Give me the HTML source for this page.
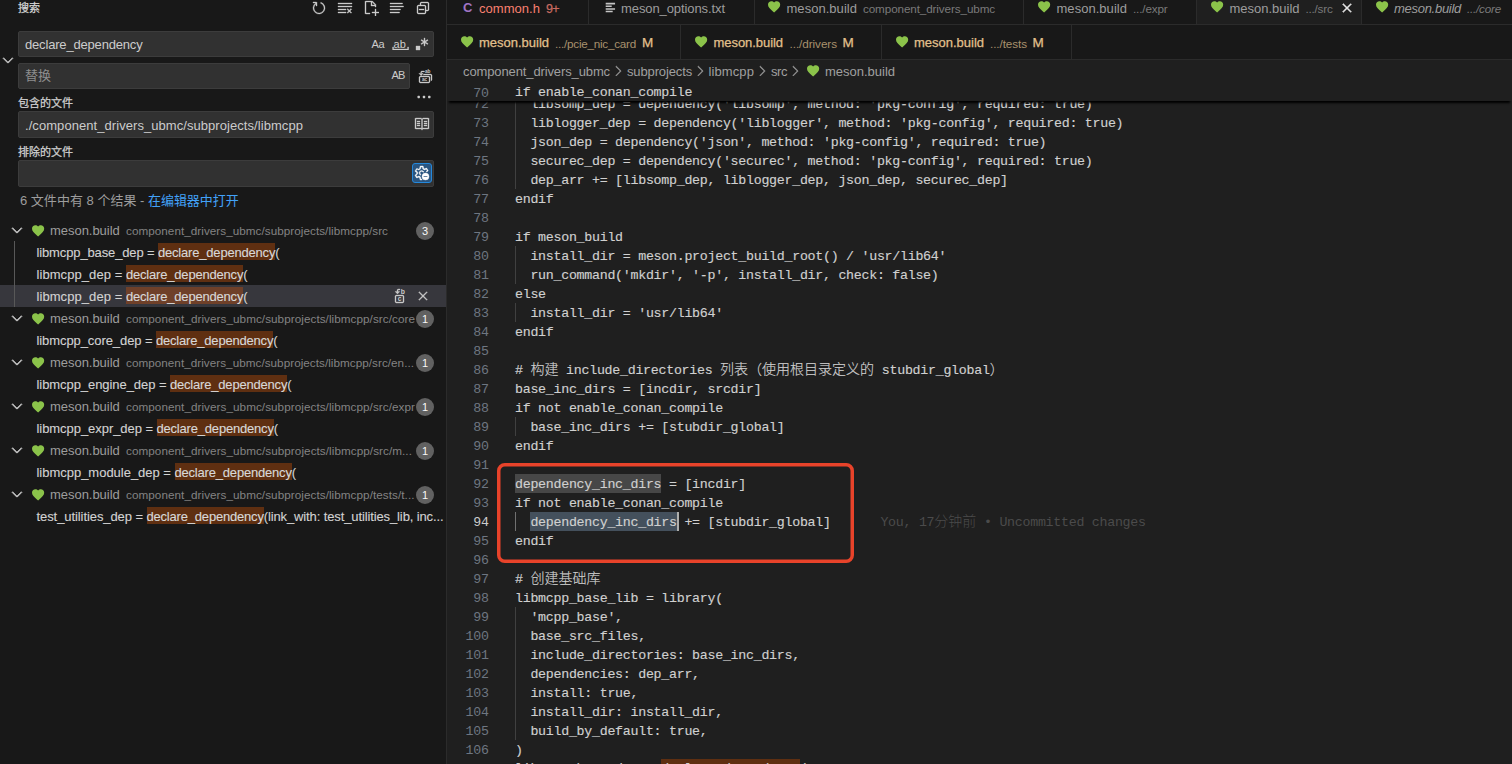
<!DOCTYPE html>
<html lang="zh-CN">
<head>
<meta charset="utf-8">
<title>搜索 - meson.build</title>
<style>
*{box-sizing:border-box;margin:0;padding:0}
html,body{width:1512px;height:764px;overflow:hidden;background:#1f1f1f}
body{position:relative;font-family:'Liberation Sans','Noto Sans CJK SC',sans-serif;font-size:13px;color:#cccccc}
.abs{position:absolute}
svg{display:block}
.tx{position:absolute;white-space:pre;display:block}
#sidebar{position:absolute;left:0;top:0;width:447px;height:764px;background:#181818;border-right:1px solid #2b2b2b;overflow:hidden}
.inp{position:absolute;left:18px;height:26px;background:#313131;border:1px solid #3c3c3c;border-radius:2px}
.badge{position:absolute;left:416px;width:18px;height:18px;border-radius:9px;background:#616161;color:#f8f8f8;font-size:11px;line-height:18px;text-align:center}
#editor{position:absolute;left:447px;top:0;width:1065px;height:764px;background:#1f1f1f;overflow:hidden}
.code{font-family:'Liberation Mono','Noto Sans CJK SC',monospace;white-space:pre;color:#d0d0d0}
.cl{-webkit-text-stroke:0.15px currentColor}
.cj{font-size:14px;letter-spacing:0;font-weight:300}
.ln{position:absolute;left:0;width:41.6px;text-align:right;height:19px;line-height:21px;color:#6e7681}
.cl{position:absolute;left:68px;height:19px;line-height:21px;white-space:pre;overflow:visible}
</style>
</head>
<body>
<div id="sidebar">
<span class="tx" style="left:18px;top:0.0px;height:16px;line-height:16px;font-size:11px;color:#d4d4d4;letter-spacing:0.0px;-webkit-text-stroke:0.25px currentColor;">搜索</span>
<svg class="abs" style="left:311px;top:0px;" width="16" height="16" viewBox="0 0 16 16" fill="#cccccc" stroke="#cccccc" stroke-width="0.35" stroke-linejoin="round"><path fill-rule="evenodd" clip-rule="evenodd" d="M4.681 3H2V2h3.5l.5.5V6H5V4a5 5 0 1 0 4.53-.761l.302-.954A6 6 0 1 1 4.681 3z"/></svg>
<svg class="abs" style="left:337px;top:0px;" width="16" height="16" viewBox="0 0 16 16" fill="#cccccc" stroke="#cccccc" stroke-width="0.35" stroke-linejoin="round"><path d="M10 12.6l.7.7 1.6-1.6 1.6 1.6.8-.7L13 11l1.7-1.6-.8-.8-1.6 1.7-1.6-1.7-.7.8 1.6 1.6-1.6 1.6zM1 4h14V3H1v1zm0 3h14V6H1v1zm8 2.5V9H1v1h8v-.5zM9 13v-1H1v1h8z"/></svg>
<svg class="abs" style="left:363px;top:0px;" width="16" height="16" viewBox="0 0 16 16" fill="#cccccc" stroke="#cccccc" stroke-width="0.35" stroke-linejoin="round"><path fill-rule="evenodd" clip-rule="evenodd" d="M9.5 1.1l3.4 3.5.1.4v2h-1V6H8V2H3v11h4v1H2.5l-.5-.5v-12l.5-.5h6.7l.3.1zM9 2v3h2.9L9 2zm4 14h-1v-3H9v-1h3V9h1v3h3v1h-3v3z"/></svg>
<svg class="abs" style="left:388px;top:0px;" width="16" height="16" viewBox="0 0 16 16" fill="#cccccc" stroke="#cccccc" stroke-width="0.35" stroke-linejoin="round"><path d="M2 3h12.5v1H2zM2 6h13.5v1H2zM2 9h10.5v1H2zM2 12h9.5v1H2z"/></svg>
<svg class="abs" style="left:415px;top:0px;" width="16" height="16" viewBox="0 0 16 16" fill="#cccccc" stroke="#cccccc" stroke-width="0.35" stroke-linejoin="round"><path d="M9 9H4v1h5V9z"/><path fill-rule="evenodd" clip-rule="evenodd" d="M5 3l1-1h7l1 1v7l-1 1h-2v2l-1 1H3l-1-1V6l1-1h2V3zm1 2h4l1 1v4h2V3H6v2zm4 1H3v7h7V6z"/></svg>
<div class="inp" style="top:31px;width:416px"></div>
<span class="tx" style="left:25px;top:36.0px;height:18px;line-height:18px;font-size:13px;color:#cccccc;letter-spacing:-0.178px;">declare_dependency</span>
<span class="tx" style="left:371.6px;top:35.0px;height:18px;line-height:18px;font-size:11px;color:#cccccc;letter-spacing:-0.377px;">Aa</span>
<span class="tx" style="left:393.5px;top:34.5px;height:18px;line-height:18px;font-size:11px;color:#cccccc;letter-spacing:0.232px;">ab</span>
<svg class="abs" style="left:391.5px;top:36px;" width="17.2" height="14" viewBox="0 0 16 14" fill="#cccccc" stroke="#cccccc" stroke-width="0.35" stroke-linejoin="round"><path fill-rule="evenodd" clip-rule="evenodd" d="M0 11H1V13H15V11H16V14H15H1H0V11Z"/></svg>
<svg class="abs" style="left:413.6px;top:35.7px;" width="16" height="16" viewBox="0 0 16 16" fill="#cccccc" stroke="#cccccc" stroke-width="0.35" stroke-linejoin="round"><path fill-rule="evenodd" clip-rule="evenodd" d="M10.012 2h.976v3.113l2.56-1.557.486.885L11.47 6l2.564 1.559-.485.885-2.561-1.557V10h-.976V6.887l-2.56 1.557-.486-.885L9.53 6 6.966 4.441l.485-.885 2.561 1.557V2zM2 10h4v4H2v-4z"/></svg>
<svg class="abs" style="left:-0.3px;top:52.3px;" width="16" height="16" viewBox="0 0 16 16" fill="#cccccc" stroke="#cccccc" stroke-width="0.6" stroke-linejoin="round"><path fill-rule="evenodd" clip-rule="evenodd" d="M7.976 10.072l4.357-4.357.62.618L8.284 11h-.618L3 6.333l.619-.618 4.357 4.357z"/></svg>
<div class="inp" style="top:63px;width:392px"></div>
<span class="tx" style="left:25px;top:67.0px;height:18px;line-height:18px;font-size:13px;color:#8e8e8e;letter-spacing:-0.0px;">替换</span>
<span class="tx" style="left:391.4px;top:65.8px;height:18px;line-height:18px;font-size:11px;color:#cccccc;letter-spacing:-0.687px;">AB</span>
<svg class="abs" style="left:417.3px;top:68.3px;opacity:.99;" width="16" height="16" viewBox="0 0 16 16" fill="#cccccc" stroke="#cccccc" stroke-width="0.35" stroke-linejoin="round"><path fill-rule="evenodd" clip-rule="evenodd" d="M2 9l1-1h9l1 1v5l-1 1H3l-1-1V9zm1 0v5h9V9H3zm3-2l1-1h7l1 1v5l-1 1V7H6z"/><path d="M4.12 7.695L2 5.568l.662-.662 1.006 1v-1.51A1.39 1.39 0 0 1 5.055 3H7.4v.905H5.055a.49.49 0 0 0-.468.493l.007 1.5.949-.944.656.656-2.08 2.085z"/><text transform="translate(7.9,5) scale(0.5)" font-size="9.6" font-family="Liberation Sans, sans-serif" font-weight="bold" stroke="none">ab</text><text transform="translate(4.9,13) scale(0.5)" font-size="9.6" font-family="Liberation Sans, sans-serif" font-weight="bold" stroke="none">ac</text></svg>
<span class="tx" style="left:18px;top:95.5px;height:14px;line-height:14px;font-size:11px;color:#d0d0d0;letter-spacing:0.0px;-webkit-text-stroke:0.25px currentColor;">包含的文件</span>
<svg class="abs" style="left:415.7px;top:89px;" width="16" height="16" viewBox="0 0 16 16" fill="#cccccc"><rect x="1.5" y="6.8" width="2.4" height="2.4" rx="0.6"/><rect x="6.8" y="6.8" width="2.4" height="2.4" rx="0.6"/><rect x="12.100" y="6.8" width="2.4" height="2.4" rx="0.6"/></svg>
<div class="inp" style="top:111px;width:416px;height:27px"></div>
<span class="tx" style="left:25px;top:117.0px;height:18px;line-height:18px;font-size:13px;color:#cccccc;letter-spacing:0.061px;">./component_drivers_ubmc/subprojects/libmcpp</span>
<svg class="abs" style="left:414.2px;top:115.7px;" width="16" height="16" viewBox="0 0 16 16" fill="#cccccc" stroke="#cccccc" stroke-width="0.35" stroke-linejoin="round"><path fill-rule="evenodd" clip-rule="evenodd" d="M14.5 2H9l-.35.15-.65.64-.65-.64L7 2H1.5l-.5.5v10l.5.5h5.29l.86.85h.7l.86-.85h5.29l.5-.5v-10l-.5-.5zm-7 10.32l-.18-.17L7 12H2V3h4.79l.74.74-.03 8.58zM14 12H9l-.35.15-.14.13V3.7l.7-.7H14v9zM6 5H3v1h3V5zm0 4H3v1h3V9zM3 7h3v1H3V7zm10-2h-3v1h3V5zm-3 2h3v1h-3V7zm0 2h3v1h-3V9z"/></svg>
<span class="tx" style="left:18px;top:144.5px;height:14px;line-height:14px;font-size:11px;color:#d0d0d0;letter-spacing:0.0px;-webkit-text-stroke:0.25px currentColor;">排除的文件</span>
<div class="inp" style="top:160px;width:416px;height:27px"></div>
<div class="abs" style="left:412px;top:163px;width:20px;height:20px;border:1px solid #2488db;border-radius:3px;background:#2a5580"></div>
<svg class="abs" style="left:414px;top:165px;" width="16" height="16" viewBox="0 0 16 16" fill="#ffffff" stroke="#ffffff" stroke-width="0.35" stroke-linejoin="round"><path d="M6.32 15l-.42-.38-.28-1.78a5.4 5.4 0 0 1-1.02-.6l-1.68.65-.55-.18-1.3-2.26.12-.56 1.4-1.12a5.2 5.2 0 0 1 0-1.18l-1.4-1.13-.12-.55 1.3-2.26.55-.18 1.68.65c.32-.24.66-.44 1.02-.6l.28-1.78L6.32 1h2.62l.42.38.28 1.78c.36.16.7.36 1.02.6l1.68-.65.55.18 1.3 2.26-.12.55-1.2.97a4.5 4.5 0 0 0-.98-.37l1.22-.98-.87-1.5-1.75.68-.43-.07a4.3 4.3 0 0 0-1.14-.66l-.27-.34L8.36 2H6.9l-.29 1.83-.27.34c-.41.16-.8.38-1.14.66l-.43.07-1.75-.68-.87 1.5 1.47 1.18.15.4a4.3 4.3 0 0 0 0 1.32l-.15.4-1.47 1.18.87 1.5 1.75-.68.43.07c.34.28.73.5 1.14.66l.27.34L6.9 14h.72c.13.36.3.7.52 1H6.320z"/><path d="M7.63 5.5a2.500 2.500 0 0 0-.9 4.830 4.500 4.500 0 0 1 .27-1.080 1.500 1.500 0 1 1 1.960-1.960 4.500 4.500 0 0 1 1.080-.270A2.500 2.500 0 0 0 7.630 5.500z"/><path fill-rule="evenodd" d="M11.500 8a3.500 3.500 0 1 0 0 7 3.500 3.500 0 0 0 0-7zm-2 3h4v1h-4v-1z"/></svg>
<span class="tx" style="left:20px;top:192.0px;height:18px;line-height:18px;font-size:13px;color:#9d9d9d;letter-spacing:0.01px;">6 文件中有 8 个结果 - </span>
<span class="tx" style="left:148px;top:192.0px;height:18px;line-height:18px;font-size:13px;color:#42a2f8;letter-spacing:-0.043px;">在编辑器中打开</span>
<div class="abs" style="left:0;top:285px;width:446px;height:22px;background:#37373d"></div>
<div class="abs" style="left:14px;top:241px;width:1px;height:66px;background:#585858"></div>
<svg class="abs" style="left:9px;top:222px;" width="16" height="16" viewBox="0 0 16 16" fill="#cccccc" stroke="#cccccc" stroke-width="0.7" stroke-linejoin="round"><path fill-rule="evenodd" clip-rule="evenodd" d="M7.976 10.072l4.357-4.357.62.618L8.284 11h-.618L3 6.333l.619-.618 4.357 4.357z"/></svg><svg class="abs" style="left:32px;top:224.5px;overflow:visible;" width="12.2" height="11.8" viewBox="2 3 20 18.35" fill="#8bc34a"><path d="M12 21.35l-1.45-1.32C5.4 15.36 2 12.28 2 8.5 2 5.42 4.42 3 7.5 3c1.74 0 3.41.81 4.5 2.09C13.09 3.81 14.76 3 16.5 3 19.58 3 22 5.42 22 8.5c0 3.78-3.4 6.86-8.55 11.54L12 21.35z"/></svg><span class="tx" style="left:50px;top:221.5px;height:18px;line-height:18px;font-size:13px;color:#9d9d9d;letter-spacing:-0.036px;">meson.build</span><span class="tx" style="left:126px;top:222.0px;height:18px;line-height:18px;font-size:11.7px;color:#838383;letter-spacing:0.047px;">component_drivers_ubmc/subprojects/libmcpp/src</span><div class="badge" style="top:222px">3</div>
<div class="abs" style="left:158px;top:243px;width:117.2px;height:17px;background:#5f2f11"></div><span class="tx" style="left:36.5px;top:243.5px;height:18px;line-height:18px;font-size:13px;color:#d2d2d2;letter-spacing:-0.129px;-webkit-text-stroke:0.12px currentColor;">libmcpp_base_dep = </span><span class="tx" style="left:158px;top:243.5px;height:18px;line-height:18px;font-size:13px;color:#d8d8d8;letter-spacing:-0.195px;-webkit-text-stroke:0.12px currentColor;">declare_dependency</span><span class="tx" style="left:275.2px;top:243.5px;height:18px;line-height:18px;font-size:13px;color:#d2d2d2;letter-spacing:0.171px;-webkit-text-stroke:0.12px currentColor;">(</span>
<div class="abs" style="left:126px;top:265px;width:117.2px;height:17px;background:#5f2f11"></div><span class="tx" style="left:36.5px;top:265.5px;height:18px;line-height:18px;font-size:13px;color:#d2d2d2;letter-spacing:0.069px;-webkit-text-stroke:0.12px currentColor;">libmcpp_dep = </span><span class="tx" style="left:126px;top:265.5px;height:18px;line-height:18px;font-size:13px;color:#d8d8d8;letter-spacing:-0.195px;-webkit-text-stroke:0.12px currentColor;">declare_dependency</span><span class="tx" style="left:243.2px;top:265.5px;height:18px;line-height:18px;font-size:13px;color:#d2d2d2;letter-spacing:0.171px;-webkit-text-stroke:0.12px currentColor;">(</span>
<div class="abs" style="left:126px;top:287px;width:117.2px;height:17px;background:#6f4029"></div><span class="tx" style="left:36.5px;top:287.5px;height:18px;line-height:18px;font-size:13px;color:#d2d2d2;letter-spacing:0.069px;-webkit-text-stroke:0.12px currentColor;">libmcpp_dep = </span><span class="tx" style="left:126px;top:287.5px;height:18px;line-height:18px;font-size:13px;color:#d8d8d8;letter-spacing:-0.195px;-webkit-text-stroke:0.12px currentColor;">declare_dependency</span><span class="tx" style="left:243.2px;top:287.5px;height:18px;line-height:18px;font-size:13px;color:#d2d2d2;letter-spacing:0.171px;-webkit-text-stroke:0.12px currentColor;">(</span>
<svg class="abs" style="left:392px;top:288px;opacity:.99;" width="16" height="16" viewBox="0 0 16 16" fill="#cccccc" stroke="#cccccc" stroke-width="0.35" stroke-linejoin="round"><path fill-rule="evenodd" clip-rule="evenodd" d="M4 7L3 8v6l1 1h7l1-1V8l-1-1H4zm0 1h7v6H4V8z"/><path d="M3.221 3.739l2.261 2.269L7.7 3.784l-.7-.7-1.012 1.007-.008-1.6a.523.523 0 0 1 .5-.526H8V1H6.48A1.482 1.482 0 0 0 5 2.489V4.1L3.927 3.033l-.706.706z"/><text transform="translate(8.7,5.95) scale(0.5)" font-size="13.6" font-family="Liberation Sans, sans-serif" font-weight="bold" stroke="none">b</text><text transform="translate(5.8,12.95) scale(0.5)" font-size="13.6" font-family="Liberation Sans, sans-serif" font-weight="bold" stroke="none">c</text></svg>
<svg class="abs" style="left:415px;top:288px;" width="16" height="16" viewBox="0 0 16 16" fill="#cccccc" stroke="#cccccc" stroke-width="0.35" stroke-linejoin="round"><path fill-rule="evenodd" clip-rule="evenodd" d="M8 8.707l3.646 3.647.708-.707L8.707 8l3.647-3.646-.707-.708L8 7.293 4.354 3.646l-.707.708L7.293 8l-3.646 3.646.707.708L8 8.707z"/></svg>
<svg class="abs" style="left:9px;top:310px;" width="16" height="16" viewBox="0 0 16 16" fill="#cccccc" stroke="#cccccc" stroke-width="0.7" stroke-linejoin="round"><path fill-rule="evenodd" clip-rule="evenodd" d="M7.976 10.072l4.357-4.357.62.618L8.284 11h-.618L3 6.333l.619-.618 4.357 4.357z"/></svg><svg class="abs" style="left:32px;top:312.5px;overflow:visible;" width="12.2" height="11.8" viewBox="2 3 20 18.35" fill="#8bc34a"><path d="M12 21.35l-1.45-1.32C5.4 15.36 2 12.28 2 8.5 2 5.42 4.42 3 7.5 3c1.74 0 3.41.81 4.5 2.09C13.09 3.81 14.76 3 16.5 3 19.58 3 22 5.42 22 8.5c0 3.78-3.4 6.86-8.55 11.54L12 21.35z"/></svg><span class="tx" style="left:50px;top:309.5px;height:18px;line-height:18px;font-size:13px;color:#9d9d9d;letter-spacing:-0.036px;">meson.build</span><span class="tx" style="left:126px;top:310.0px;height:18px;line-height:18px;font-size:11.7px;color:#838383;letter-spacing:0.062px;">component_drivers_ubmc/subprojects/libmcpp/src/core</span><div class="badge" style="top:310px">1</div>
<div class="abs" style="left:156px;top:331px;width:117.2px;height:17px;background:#5f2f11"></div><span class="tx" style="left:36.5px;top:331.5px;height:18px;line-height:18px;font-size:13px;color:#d2d2d2;letter-spacing:-0.082px;-webkit-text-stroke:0.12px currentColor;">libmcpp_core_dep = </span><span class="tx" style="left:156px;top:331.5px;height:18px;line-height:18px;font-size:13px;color:#d8d8d8;letter-spacing:-0.195px;-webkit-text-stroke:0.12px currentColor;">declare_dependency</span><span class="tx" style="left:273.2px;top:331.5px;height:18px;line-height:18px;font-size:13px;color:#d2d2d2;letter-spacing:0.171px;-webkit-text-stroke:0.12px currentColor;">(</span>
<svg class="abs" style="left:9px;top:354px;" width="16" height="16" viewBox="0 0 16 16" fill="#cccccc" stroke="#cccccc" stroke-width="0.7" stroke-linejoin="round"><path fill-rule="evenodd" clip-rule="evenodd" d="M7.976 10.072l4.357-4.357.62.618L8.284 11h-.618L3 6.333l.619-.618 4.357 4.357z"/></svg><svg class="abs" style="left:32px;top:356.5px;overflow:visible;" width="12.2" height="11.8" viewBox="2 3 20 18.35" fill="#8bc34a"><path d="M12 21.35l-1.45-1.32C5.4 15.36 2 12.28 2 8.5 2 5.42 4.42 3 7.5 3c1.74 0 3.41.81 4.5 2.09C13.09 3.81 14.76 3 16.5 3 19.58 3 22 5.42 22 8.5c0 3.78-3.4 6.86-8.55 11.54L12 21.35z"/></svg><span class="tx" style="left:50px;top:353.5px;height:18px;line-height:18px;font-size:13px;color:#9d9d9d;letter-spacing:-0.036px;">meson.build</span><span class="tx" style="left:126px;top:354.0px;height:18px;line-height:18px;font-size:11.7px;color:#838383;letter-spacing:0.042px;">component_drivers_ubmc/subprojects/libmcpp/src/en...</span><div class="badge" style="top:354px">1</div>
<div class="abs" style="left:170px;top:375px;width:117.2px;height:17px;background:#5f2f11"></div><span class="tx" style="left:36.5px;top:375.5px;height:18px;line-height:18px;font-size:13px;color:#d2d2d2;letter-spacing:-0.062px;-webkit-text-stroke:0.12px currentColor;">libmcpp_engine_dep = </span><span class="tx" style="left:170px;top:375.5px;height:18px;line-height:18px;font-size:13px;color:#d8d8d8;letter-spacing:-0.195px;-webkit-text-stroke:0.12px currentColor;">declare_dependency</span><span class="tx" style="left:287.2px;top:375.5px;height:18px;line-height:18px;font-size:13px;color:#d2d2d2;letter-spacing:0.171px;-webkit-text-stroke:0.12px currentColor;">(</span>
<svg class="abs" style="left:9px;top:398px;" width="16" height="16" viewBox="0 0 16 16" fill="#cccccc" stroke="#cccccc" stroke-width="0.7" stroke-linejoin="round"><path fill-rule="evenodd" clip-rule="evenodd" d="M7.976 10.072l4.357-4.357.62.618L8.284 11h-.618L3 6.333l.619-.618 4.357 4.357z"/></svg><svg class="abs" style="left:32px;top:400.5px;overflow:visible;" width="12.2" height="11.8" viewBox="2 3 20 18.35" fill="#8bc34a"><path d="M12 21.35l-1.45-1.32C5.4 15.36 2 12.28 2 8.5 2 5.42 4.42 3 7.5 3c1.74 0 3.41.81 4.5 2.09C13.09 3.81 14.76 3 16.5 3 19.58 3 22 5.42 22 8.5c0 3.78-3.4 6.86-8.55 11.54L12 21.35z"/></svg><span class="tx" style="left:50px;top:397.5px;height:18px;line-height:18px;font-size:13px;color:#9d9d9d;letter-spacing:-0.036px;">meson.build</span><span class="tx" style="left:126px;top:398.0px;height:18px;line-height:18px;font-size:11.7px;color:#838383;letter-spacing:0.062px;">component_drivers_ubmc/subprojects/libmcpp/src/expr</span><div class="badge" style="top:398px">1</div>
<div class="abs" style="left:156.5px;top:419px;width:117.2px;height:17px;background:#5f2f11"></div><span class="tx" style="left:36.5px;top:419.5px;height:18px;line-height:18px;font-size:13px;color:#d2d2d2;letter-spacing:-0.055px;-webkit-text-stroke:0.12px currentColor;">libmcpp_expr_dep = </span><span class="tx" style="left:156.5px;top:419.5px;height:18px;line-height:18px;font-size:13px;color:#d8d8d8;letter-spacing:-0.195px;-webkit-text-stroke:0.12px currentColor;">declare_dependency</span><span class="tx" style="left:273.7px;top:419.5px;height:18px;line-height:18px;font-size:13px;color:#d2d2d2;letter-spacing:0.171px;-webkit-text-stroke:0.12px currentColor;">(</span>
<svg class="abs" style="left:9px;top:442px;" width="16" height="16" viewBox="0 0 16 16" fill="#cccccc" stroke="#cccccc" stroke-width="0.7" stroke-linejoin="round"><path fill-rule="evenodd" clip-rule="evenodd" d="M7.976 10.072l4.357-4.357.62.618L8.284 11h-.618L3 6.333l.619-.618 4.357 4.357z"/></svg><svg class="abs" style="left:32px;top:444.5px;overflow:visible;" width="12.2" height="11.8" viewBox="2 3 20 18.35" fill="#8bc34a"><path d="M12 21.35l-1.45-1.32C5.4 15.36 2 12.28 2 8.5 2 5.42 4.42 3 7.5 3c1.74 0 3.41.81 4.5 2.09C13.09 3.81 14.76 3 16.5 3 19.58 3 22 5.42 22 8.5c0 3.78-3.4 6.86-8.55 11.54L12 21.35z"/></svg><span class="tx" style="left:50px;top:441.5px;height:18px;line-height:18px;font-size:13px;color:#9d9d9d;letter-spacing:-0.036px;">meson.build</span><span class="tx" style="left:126px;top:442.0px;height:18px;line-height:18px;font-size:11.7px;color:#838383;letter-spacing:0.067px;">component_drivers_ubmc/subprojects/libmcpp/src/m...</span><div class="badge" style="top:442px">1</div>
<div class="abs" style="left:174.5px;top:463px;width:117.2px;height:17px;background:#5f2f11"></div><span class="tx" style="left:36.5px;top:463.5px;height:18px;line-height:18px;font-size:13px;color:#d2d2d2;letter-spacing:-0.019px;-webkit-text-stroke:0.12px currentColor;">libmcpp_module_dep = </span><span class="tx" style="left:174.5px;top:463.5px;height:18px;line-height:18px;font-size:13px;color:#d8d8d8;letter-spacing:-0.195px;-webkit-text-stroke:0.12px currentColor;">declare_dependency</span><span class="tx" style="left:291.7px;top:463.5px;height:18px;line-height:18px;font-size:13px;color:#d2d2d2;letter-spacing:0.171px;-webkit-text-stroke:0.12px currentColor;">(</span>
<svg class="abs" style="left:9px;top:486px;" width="16" height="16" viewBox="0 0 16 16" fill="#cccccc" stroke="#cccccc" stroke-width="0.7" stroke-linejoin="round"><path fill-rule="evenodd" clip-rule="evenodd" d="M7.976 10.072l4.357-4.357.62.618L8.284 11h-.618L3 6.333l.619-.618 4.357 4.357z"/></svg><svg class="abs" style="left:32px;top:488.5px;overflow:visible;" width="12.2" height="11.8" viewBox="2 3 20 18.35" fill="#8bc34a"><path d="M12 21.35l-1.45-1.32C5.4 15.36 2 12.28 2 8.5 2 5.42 4.42 3 7.5 3c1.74 0 3.41.81 4.5 2.09C13.09 3.81 14.76 3 16.5 3 19.58 3 22 5.42 22 8.5c0 3.78-3.4 6.86-8.55 11.54L12 21.35z"/></svg><span class="tx" style="left:50px;top:485.5px;height:18px;line-height:18px;font-size:13px;color:#9d9d9d;letter-spacing:-0.036px;">meson.build</span><span class="tx" style="left:126px;top:486.0px;height:18px;line-height:18px;font-size:11.7px;color:#838383;letter-spacing:0.063px;">component_drivers_ubmc/subprojects/libmcpp/tests/t...</span><div class="badge" style="top:486px">1</div>
<div class="abs" style="left:146.5px;top:507px;width:117.2px;height:17px;background:#5f2f11"></div><span class="tx" style="left:36.5px;top:507.5px;height:18px;line-height:18px;font-size:13px;color:#d2d2d2;letter-spacing:-0.079px;-webkit-text-stroke:0.12px currentColor;">test_utilities_dep = </span><span class="tx" style="left:146.5px;top:507.5px;height:18px;line-height:18px;font-size:13px;color:#d8d8d8;letter-spacing:-0.195px;-webkit-text-stroke:0.12px currentColor;">declare_dependency</span><span class="tx" style="left:263.7px;top:507.5px;height:18px;line-height:18px;font-size:13px;color:#d2d2d2;letter-spacing:-0.117px;-webkit-text-stroke:0.12px currentColor;">(link_with: test_utilities_lib, inc...</span>
</div>
<div id="editor">
<div class="abs" style="left:0;top:0;width:1065px;height:25px;background:#181818;border-bottom:1px solid #2b2b2b"></div>
<div class="abs" style="left:750px;top:0;width:164px;height:24px;background:#1f1f1f"></div>
<div class="abs" style="left:141px;top:0;width:1px;height:24px;background:#2b2b2b"></div>
<div class="abs" style="left:307px;top:0;width:1px;height:24px;background:#2b2b2b"></div>
<div class="abs" style="left:576px;top:0;width:1px;height:24px;background:#2b2b2b"></div>
<div class="abs" style="left:749px;top:0;width:1px;height:24px;background:#2b2b2b"></div>
<div class="abs" style="left:914px;top:0;width:1px;height:24px;background:#2b2b2b"></div>
<span class="tx" style="left:16px;top:-1.5px;height:18px;line-height:18px;font-size:13px;color:#a074c4;letter-spacing:-0.888px;font-weight:bold;">C</span>
<span class="tx" style="left:32px;top:-0.5px;height:18px;line-height:18px;font-size:13px;color:#f88070;letter-spacing:0.039px;">common.h</span>
<span class="tx" style="left:99px;top:-0.5px;height:18px;line-height:18px;font-size:12.5px;color:#c86b60;letter-spacing:-0.626px;-webkit-text-stroke:0.25px currentColor;">9+</span>
<svg class="abs" style="left:158.29999999999995px;top:1.6px;" width="11.2" height="11.2" viewBox="0 0 16 16" fill="#c5c5c5"><path d="M1 1.2h13.4v2.2H1zM1 5h8.6v2.2H1zM1 8.8h13.4v2.2H1zM1 12.600h10v2.2H1z"/></svg>
<span class="tx" style="left:174px;top:-0.5px;height:18px;line-height:18px;font-size:13px;color:#9d9d9d;letter-spacing:-0.088px;">meson_options.txt</span>
<svg class="abs" style="left:321px;top:1.3px;overflow:visible;" width="12.2" height="11.8" viewBox="2 3 20 18.35" fill="#8bc34a"><path d="M12 21.35l-1.45-1.32C5.4 15.36 2 12.28 2 8.5 2 5.42 4.42 3 7.5 3c1.74 0 3.41.81 4.5 2.09C13.09 3.81 14.76 3 16.5 3 19.58 3 22 5.42 22 8.5c0 3.78-3.4 6.86-8.55 11.54L12 21.35z"/></svg>
<span class="tx" style="left:339.5px;top:-0.5px;height:18px;line-height:18px;font-size:13px;color:#9d9d9d;letter-spacing:0.037px;">meson.build</span>
<span class="tx" style="left:416px;top:0.0px;height:18px;line-height:18px;font-size:11.7px;color:#7a7a7a;letter-spacing:-0.112px;">component_drivers_ubmc</span>
<svg class="abs" style="left:590.5px;top:1.3px;overflow:visible;" width="12.2" height="11.8" viewBox="2 3 20 18.35" fill="#8bc34a"><path d="M12 21.35l-1.45-1.32C5.4 15.36 2 12.28 2 8.5 2 5.42 4.42 3 7.5 3c1.74 0 3.41.81 4.5 2.09C13.09 3.81 14.76 3 16.5 3 19.58 3 22 5.42 22 8.5c0 3.78-3.4 6.86-8.55 11.54L12 21.35z"/></svg>
<span class="tx" style="left:609.5px;top:-0.5px;height:18px;line-height:18px;font-size:13px;color:#9d9d9d;letter-spacing:0.037px;">meson.build</span>
<span class="tx" style="left:686px;top:0.0px;height:18px;line-height:18px;font-size:11.7px;color:#7a7a7a;letter-spacing:-0.153px;">.../expr</span>
<svg class="abs" style="left:764px;top:1.3px;overflow:visible;" width="12.2" height="11.8" viewBox="2 3 20 18.35" fill="#8bc34a"><path d="M12 21.35l-1.45-1.32C5.4 15.36 2 12.28 2 8.5 2 5.42 4.42 3 7.5 3c1.74 0 3.41.81 4.5 2.09C13.09 3.81 14.76 3 16.5 3 19.58 3 22 5.42 22 8.5c0 3.78-3.4 6.86-8.55 11.54L12 21.35z"/></svg>
<span class="tx" style="left:782.5px;top:-0.5px;height:18px;line-height:18px;font-size:13px;color:#9d9d9d;letter-spacing:-0.009px;">meson.build</span>
<span class="tx" style="left:858.5px;top:0.0px;height:18px;line-height:18px;font-size:11.7px;color:#7a7a7a;letter-spacing:-0.224px;">.../src</span>
<svg class="abs" style="left:892px;top:-0.5px;" width="16" height="16" viewBox="0 0 16 16" fill="#f0f0f0" stroke="#f0f0f0" stroke-width="0.6" stroke-linejoin="round"><path fill-rule="evenodd" clip-rule="evenodd" d="M8 8.707l3.646 3.647.708-.707L8.707 8l3.647-3.646-.707-.708L8 7.293 4.354 3.646l-.707.708L7.293 8l-3.646 3.646.707.708L8 8.707z"/></svg>
<svg class="abs" style="left:929px;top:1.3px;overflow:visible;" width="12.2" height="11.8" viewBox="2 3 20 18.35" fill="#8bc34a"><path d="M12 21.35l-1.45-1.32C5.4 15.36 2 12.28 2 8.5 2 5.42 4.42 3 7.5 3c1.74 0 3.41.81 4.5 2.09C13.09 3.81 14.76 3 16.5 3 19.58 3 22 5.42 22 8.5c0 3.78-3.4 6.86-8.55 11.54L12 21.35z"/></svg>
<span class="tx" style="left:947px;top:-0.5px;height:18px;line-height:18px;font-size:13px;color:#9d9d9d;letter-spacing:-0.282px;font-style:italic;">meson.build</span>
<span class="tx" style="left:1020px;top:0.0px;height:18px;line-height:18px;font-size:11.7px;color:#7a7a7a;letter-spacing:-0.216px;font-style:italic;">.../core</span>
<div class="abs" style="left:0;top:25px;width:1065px;height:35px;background:#181818;border-bottom:1px solid #2b2b2b"></div>
<div class="abs" style="left:233px;top:25px;width:1px;height:34px;background:#2b2b2b"></div>
<div class="abs" style="left:434px;top:25px;width:1px;height:34px;background:#2b2b2b"></div>
<div class="abs" style="left:624px;top:25px;width:1px;height:34px;background:#2b2b2b"></div>
<svg class="abs" style="left:14px;top:36px;overflow:visible;" width="12.2" height="11.8" viewBox="2 3 20 18.35" fill="#8bc34a"><path d="M12 21.35l-1.45-1.32C5.4 15.36 2 12.28 2 8.5 2 5.42 4.42 3 7.5 3c1.74 0 3.41.81 4.5 2.09C13.09 3.81 14.76 3 16.5 3 19.58 3 22 5.42 22 8.5c0 3.78-3.4 6.86-8.55 11.54L12 21.35z"/></svg>
<span class="tx" style="left:32px;top:34.2px;height:18px;line-height:18px;font-size:13px;color:#e2c08d;letter-spacing:-0.009px;-webkit-text-stroke:0.25px currentColor;">meson.build</span>
<span class="tx" style="left:108px;top:34.7px;height:18px;line-height:18px;font-size:11.7px;color:#a8916d;letter-spacing:-0.241px;">.../pcie_nic_card</span>
<span class="tx" style="left:195px;top:34.2px;height:18px;line-height:18px;font-size:13.5px;color:#e2c08d;letter-spacing:-0.746px;-webkit-text-stroke:0.25px currentColor;">M</span>
<svg class="abs" style="left:248px;top:36px;overflow:visible;" width="12.2" height="11.8" viewBox="2 3 20 18.35" fill="#8bc34a"><path d="M12 21.35l-1.45-1.32C5.4 15.36 2 12.28 2 8.5 2 5.42 4.42 3 7.5 3c1.74 0 3.41.81 4.5 2.09C13.09 3.81 14.76 3 16.5 3 19.58 3 22 5.42 22 8.5c0 3.78-3.4 6.86-8.55 11.54L12 21.35z"/></svg>
<span class="tx" style="left:266.5px;top:34.2px;height:18px;line-height:18px;font-size:13px;color:#e2c08d;letter-spacing:-0.054px;-webkit-text-stroke:0.25px currentColor;">meson.build</span>
<span class="tx" style="left:342.5px;top:34.7px;height:18px;line-height:18px;font-size:11.7px;color:#a8916d;letter-spacing:-0.051px;">.../drivers</span>
<span class="tx" style="left:395.5px;top:34.2px;height:18px;line-height:18px;font-size:13.5px;color:#e2c08d;letter-spacing:-1.246px;-webkit-text-stroke:0.25px currentColor;">M</span>
<svg class="abs" style="left:448.5px;top:36px;overflow:visible;" width="12.2" height="11.8" viewBox="2 3 20 18.35" fill="#8bc34a"><path d="M12 21.35l-1.45-1.32C5.4 15.36 2 12.28 2 8.5 2 5.42 4.42 3 7.5 3c1.74 0 3.41.81 4.5 2.09C13.09 3.81 14.76 3 16.5 3 19.58 3 22 5.42 22 8.5c0 3.78-3.4 6.86-8.55 11.54L12 21.35z"/></svg>
<span class="tx" style="left:467px;top:34.2px;height:18px;line-height:18px;font-size:13px;color:#e2c08d;letter-spacing:-0.009px;-webkit-text-stroke:0.25px currentColor;">meson.build</span>
<span class="tx" style="left:543px;top:34.7px;height:18px;line-height:18px;font-size:11.7px;color:#a8916d;letter-spacing:-0.075px;">.../tests</span>
<span class="tx" style="left:585.5px;top:34.2px;height:18px;line-height:18px;font-size:13.5px;color:#e2c08d;letter-spacing:-1.246px;-webkit-text-stroke:0.25px currentColor;">M</span>
<span class="tx" style="left:16px;top:62.5px;height:18px;line-height:18px;font-size:13px;color:#a0a0a0;letter-spacing:-0.117px;">component_drivers_ubmc</span>
<svg class="abs" style="left:163.2px;top:62.6px;" width="16" height="16" viewBox="0 0 16 16" fill="#a0a0a0" stroke="#a0a0a0" stroke-width="0.35" stroke-linejoin="round"><path fill-rule="evenodd" clip-rule="evenodd" d="M10.072 8.024L5.715 3.667l.618-.62L11 7.716v.618L6.333 13l-.618-.619 4.357-4.357z"/></svg>
<span class="tx" style="left:180px;top:62.5px;height:18px;line-height:18px;font-size:13px;color:#a0a0a0;letter-spacing:-0.134px;">subprojects</span>
<svg class="abs" style="left:244.7px;top:62.6px;" width="16" height="16" viewBox="0 0 16 16" fill="#a0a0a0" stroke="#a0a0a0" stroke-width="0.35" stroke-linejoin="round"><path fill-rule="evenodd" clip-rule="evenodd" d="M10.072 8.024L5.715 3.667l.618-.62L11 7.716v.618L6.333 13l-.618-.619 4.357-4.357z"/></svg>
<span class="tx" style="left:261.5px;top:62.5px;height:18px;line-height:18px;font-size:13px;color:#a0a0a0;letter-spacing:0.101px;">libmcpp</span>
<svg class="abs" style="left:307.2px;top:62.6px;" width="16" height="16" viewBox="0 0 16 16" fill="#a0a0a0" stroke="#a0a0a0" stroke-width="0.35" stroke-linejoin="round"><path fill-rule="evenodd" clip-rule="evenodd" d="M10.072 8.024L5.715 3.667l.618-.62L11 7.716v.618L6.333 13l-.618-.619 4.357-4.357z"/></svg>
<span class="tx" style="left:324px;top:62.5px;height:18px;line-height:18px;font-size:13px;color:#a0a0a0;letter-spacing:-0.443px;">src</span>
<svg class="abs" style="left:339.7px;top:62.6px;" width="16" height="16" viewBox="0 0 16 16" fill="#a0a0a0" stroke="#a0a0a0" stroke-width="0.35" stroke-linejoin="round"><path fill-rule="evenodd" clip-rule="evenodd" d="M10.072 8.024L5.715 3.667l.618-.62L11 7.716v.618L6.333 13l-.618-.619 4.357-4.357z"/></svg>
<svg class="abs" style="left:359.79999999999995px;top:65.2px;overflow:visible;" width="12.2" height="11.8" viewBox="2 3 20 18.35" fill="#8bc34a"><path d="M12 21.35l-1.45-1.32C5.4 15.36 2 12.28 2 8.5 2 5.42 4.42 3 7.5 3c1.74 0 3.41.81 4.5 2.09C13.09 3.81 14.76 3 16.5 3 19.58 3 22 5.42 22 8.5c0 3.78-3.4 6.86-8.55 11.54L12 21.35z"/></svg>
<span class="tx" style="left:378px;top:62.5px;height:18px;line-height:18px;font-size:13px;color:#a0a0a0;letter-spacing:-0.009px;">meson.build</span>
<div class="code" style="position:absolute;left:0;top:0;width:1065px;height:764px;font-size:13.3px;letter-spacing:-0.2794px">
<div class="abs" style="left:68px;top:474px;width:146.3px;height:19px;background:#474747"></div>
<div class="abs" style="left:83.4px;top:512px;width:146.3px;height:19px;background:#44505c"></div>
<div class="abs" style="left:214.3px;top:759px;width:138.6px;height:19px;background:#5f2f11"></div>
<div class="abs" style="left:68px;top:94px;width:1px;height:95px;background:#404040"></div>
<div class="abs" style="left:68px;top:246px;width:1px;height:38px;background:#404040"></div>
<div class="abs" style="left:68px;top:303px;width:1px;height:19px;background:#404040"></div>
<div class="abs" style="left:68px;top:417px;width:1px;height:19px;background:#404040"></div>
<div class="abs" style="left:68px;top:512px;width:1px;height:19px;background:#707070"></div>
<div class="abs" style="left:68px;top:607px;width:1px;height:133px;background:#404040"></div>
<div class="ln" style="top:94px;color:#6e7681">72</div>
<div class="cl" style="top:94px">  libsomp_dep = dependency('libsomp', method: 'pkg-config', required: true)</div>
<div class="ln" style="top:113px;color:#6e7681">73</div>
<div class="cl" style="top:113px">  liblogger_dep = dependency('liblogger', method: 'pkg-config', required: true)</div>
<div class="ln" style="top:132px;color:#6e7681">74</div>
<div class="cl" style="top:132px">  json_dep = dependency('json', method: 'pkg-config', required: true)</div>
<div class="ln" style="top:151px;color:#6e7681">75</div>
<div class="cl" style="top:151px">  securec_dep = dependency('securec', method: 'pkg-config', required: true)</div>
<div class="ln" style="top:170px;color:#6e7681">76</div>
<div class="cl" style="top:170px">  dep_arr += [libsomp_dep, liblogger_dep, json_dep, securec_dep]</div>
<div class="ln" style="top:189px;color:#6e7681">77</div>
<div class="cl" style="top:189px">endif</div>
<div class="ln" style="top:208px;color:#6e7681">78</div>
<div class="ln" style="top:227px;color:#6e7681">79</div>
<div class="cl" style="top:227px">if meson_build</div>
<div class="ln" style="top:246px;color:#6e7681">80</div>
<div class="cl" style="top:246px">  install_dir = meson.project_build_root() / 'usr/lib64'</div>
<div class="ln" style="top:265px;color:#6e7681">81</div>
<div class="cl" style="top:265px">  run_command('mkdir', '-p', install_dir, check: false)</div>
<div class="ln" style="top:284px;color:#6e7681">82</div>
<div class="cl" style="top:284px">else</div>
<div class="ln" style="top:303px;color:#6e7681">83</div>
<div class="cl" style="top:303px">  install_dir = 'usr/lib64'</div>
<div class="ln" style="top:322px;color:#6e7681">84</div>
<div class="cl" style="top:322px">endif</div>
<div class="ln" style="top:341px;color:#6e7681">85</div>
<div class="ln" style="top:360px;color:#6e7681">86</div>
<div class="cl" style="top:360px"># <span class="cj">构建</span> include_directories <span class="cj">列表（使用根目录定义的</span> stubdir_global<span class="cj">）</span></div>
<div class="ln" style="top:379px;color:#6e7681">87</div>
<div class="cl" style="top:379px">base_inc_dirs = [incdir, srcdir]</div>
<div class="ln" style="top:398px;color:#6e7681">88</div>
<div class="cl" style="top:398px">if not enable_conan_compile</div>
<div class="ln" style="top:417px;color:#6e7681">89</div>
<div class="cl" style="top:417px">  base_inc_dirs += [stubdir_global]</div>
<div class="ln" style="top:436px;color:#6e7681">90</div>
<div class="cl" style="top:436px">endif</div>
<div class="ln" style="top:455px;color:#6e7681">91</div>
<div class="ln" style="top:474px;color:#6e7681">92</div>
<div class="cl" style="top:474px">dependency_inc_dirs = [incdir]</div>
<div class="ln" style="top:493px;color:#6e7681">93</div>
<div class="cl" style="top:493px">if not enable_conan_compile</div>
<div class="ln" style="top:512px;color:#cccccc">94</div>
<div class="cl" style="top:512px">  dependency_inc_dirs += [stubdir_global]</div>
<div class="ln" style="top:531px;color:#6e7681">95</div>
<div class="cl" style="top:531px">endif</div>
<div class="ln" style="top:550px;color:#6e7681">96</div>
<div class="ln" style="top:569px;color:#6e7681">97</div>
<div class="cl" style="top:569px"># <span class="cj">创建基础库</span></div>
<div class="ln" style="top:588px;color:#6e7681">98</div>
<div class="cl" style="top:588px">libmcpp_base_lib = library(</div>
<div class="ln" style="top:607px;color:#6e7681">99</div>
<div class="cl" style="top:607px">  'mcpp_base',</div>
<div class="ln" style="top:626px;color:#6e7681">100</div>
<div class="cl" style="top:626px">  base_src_files,</div>
<div class="ln" style="top:645px;color:#6e7681">101</div>
<div class="cl" style="top:645px">  include_directories: base_inc_dirs,</div>
<div class="ln" style="top:664px;color:#6e7681">102</div>
<div class="cl" style="top:664px">  dependencies: dep_arr,</div>
<div class="ln" style="top:683px;color:#6e7681">103</div>
<div class="cl" style="top:683px">  install: true,</div>
<div class="ln" style="top:702px;color:#6e7681">104</div>
<div class="cl" style="top:702px">  install_dir: install_dir,</div>
<div class="ln" style="top:721px;color:#6e7681">105</div>
<div class="cl" style="top:721px">  build_by_default: true,</div>
<div class="ln" style="top:740px;color:#6e7681">106</div>
<div class="cl" style="top:740px">)</div>
<div class="ln" style="top:759px;color:#6e7681">107</div>
<div class="cl" style="top:758px">libmcpp_base_dep = declare_dependency(</div>
<div class="abs" style="left:230px;top:512px;width:2px;height:19px;background:#aeafad"></div>
<div class="cl" style="left:433.4px;top:512px;color:#4b4b4b;-webkit-text-stroke:0">You, 17<span class="cj">分钟前</span> • Uncommitted changes</div>
<div class="abs" style="left:0;top:82px;width:1065px;height:19px;background:#1f1f1f;box-shadow:0 4px 2px -2px #000"></div>
<div class="ln" style="top:83px;">70</div>
<div class="cl" style="top:82px">if enable_conan_compile</div>
</div>
<svg class="abs" style="left:50px;top:463px" width="357" height="100" viewBox="0 0 357 100" fill="none"><rect x="1.75" y="1.75" width="353.5" height="96.5" rx="6" ry="6" stroke="#e8432a" stroke-width="3.5"/></svg>
</div>
</body>
</html>
